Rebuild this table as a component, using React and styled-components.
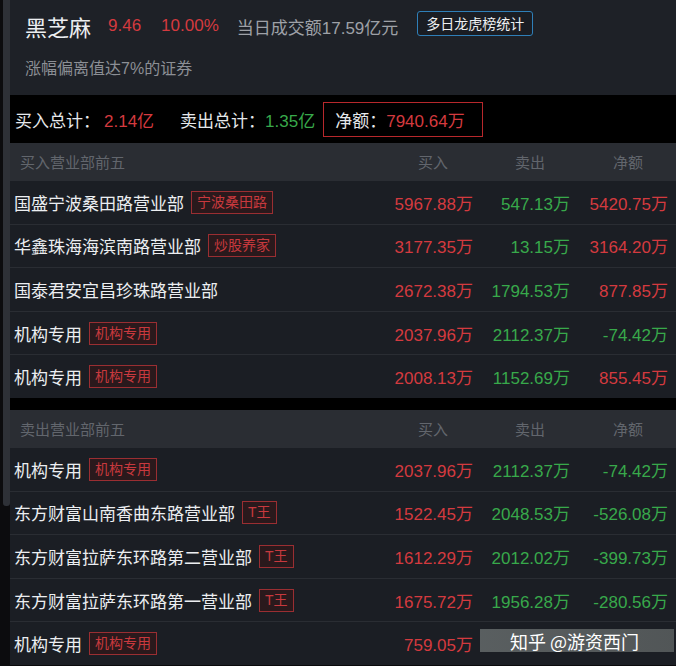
import React from 'react';
import styled, { createGlobalStyle } from 'styled-components';

const GlobalStyle = createGlobalStyle`
  html, body {
    margin: 0;
    padding: 0;
    background: #0a0a0c;
  }
  body {
    font-family: 'Liberation Sans', 'Noto Sans CJK SC', sans-serif;
  }
`;

const RED = '#d43a3f';
const GREEN = '#38a94b';

const Frame = styled.div`
  position: relative;
  width: 676px;
  height: 666px;
  display: flex;
  background: #0a0a0c;
  overflow: hidden;
`;

const Rail = styled.div`
  width: 10px;
  display: flex;
  flex-direction: column;
  background: #0c0c0e;
  padding-left: 3px;
  box-sizing: border-box;
`;

const RailThumb = styled.div`
  height: 506px;
  background: #2e3137;
  border-radius: 0 0 3px 3px;
`;

const Main = styled.div`
  flex: 1;
  display: flex;
  flex-direction: column;
`;

const Header = styled.div`
  height: 95px;
  background: #1e2127;
  padding: 0 0 0 15px;
  display: flex;
  flex-direction: column;
  box-sizing: border-box;
`;

const TitleRow = styled.div`
  display: flex;
  align-items: center;
  height: 40px;
  margin-top: 6px;
`;

const Stock = styled.span`
  font-size: 22px;
  color: #eceef1;
  margin-right: 17px;
`;

const Quote = styled.span`
  font-size: 17px;
  color: ${RED};
  margin-right: ${p => p.$gap || 20}px;
`;

const Turnover = styled.span`
  font-size: 17px;
  color: #9ea1a7;
  margin-right: 19px;
`;

const MultiButton = styled.button`
  font-family: inherit;
  font-size: 14px;
  color: #eef0f2;
  background: #1a1d23;
  border: 1px solid #2f7fb8;
  border-radius: 3px;
  height: 25px;
  padding: 0 8px;
  margin-top: -6px;
`;

const Sub = styled.div`
  font-size: 16px;
  color: #8c8f95;
  margin-top: 9px;
`;

const Summary = styled.div`
  height: 48px;
  background: #000;
  display: flex;
  align-items: center;
  padding-left: 5px;
  font-size: 17px;
  color: #e6e8eb;
`;

const SumLabel = styled.span`
  margin-left: ${p => p.$ml || 0}px;
`;

const SumValue = styled.span`
  color: ${p => p.$color};
  margin-left: ${p => p.$ml || 0}px;
`;

const NetBox = styled.div`
  margin-left: 8px;
  height: 35px;
  width: 160px;
  box-sizing: border-box;
  border: 1.5px solid #b8282c;
  display: flex;
  align-items: center;
  padding-left: 11px;
`;

const Section = styled.div`
  display: flex;
  flex-direction: column;
  background: #1b1e24;
`;

const Gap = styled.div`
  height: 12px;
  background: #000;
`;

const Grid = styled.div`
  display: grid;
  grid-template-columns: 1fr 98px 97px 98px;
  padding-right: 8px;
  align-items: center;
`;

const HeadRow = styled(Grid)`
  height: 37px;
  background: #2a2d33;
  font-size: 15px;
  color: #62666d;
`;

const HeadTitle = styled.span`
  padding-left: 10px;
`;

const HeadCol = styled.span`
  text-align: right;
  padding-right: 25px;
`;

const Row = styled(Grid)`
  height: 43.6px;
  box-sizing: border-box;
  border-top: 1px solid #2a2d33;
  font-size: 17px;
`;

const Name = styled.div`
  display: flex;
  align-items: center;
  gap: 7px;
  padding-left: 4px;
  color: #eceef1;
  white-space: nowrap;
`;

const Tag = styled.span`
  font-size: 14px;
  color: #c8393e;
  background: #2a191c;
  border: 1px solid #9a2e32;
  height: 21px;
  line-height: 21px;
  padding: 0 5px;
`;

const Num = styled.span`
  text-align: right;
  color: ${p => p.$color};
  white-space: nowrap;
`;

const Watermark = styled.div`
  position: absolute;
  left: 480px;
  top: 629px;
  width: 194px;
  height: 23px;
  background: linear-gradient(90deg, rgba(110, 116, 116, 0.75), rgba(95, 100, 100, 0.8));
  display: flex;
  align-items: center;
  padding-left: 30px;
  box-sizing: border-box;
  font-size: 18px;
  color: #fff;
  font-family: 'Noto Sans CJK SC', sans-serif;
`;

const buyRows = [
  ['国盛宁波桑田路营业部', '宁波桑田路', '5967.88万', '547.13万', '5420.75万'],
  ['华鑫珠海海滨南路营业部', '炒股养家', '3177.35万', '13.15万', '3164.20万'],
  ['国泰君安宜昌珍珠路营业部', null, '2672.38万', '1794.53万', '877.85万'],
  ['机构专用', '机构专用', '2037.96万', '2112.37万', '-74.42万'],
  ['机构专用', '机构专用', '2008.13万', '1152.69万', '855.45万'],
];

const sellRows = [
  ['机构专用', '机构专用', '2037.96万', '2112.37万', '-74.42万'],
  ['东方财富山南香曲东路营业部', 'T王', '1522.45万', '2048.53万', '-526.08万'],
  ['东方财富拉萨东环路第二营业部', 'T王', '1612.29万', '2012.02万', '-399.73万'],
  ['东方财富拉萨东环路第一营业部', 'T王', '1675.72万', '1956.28万', '-280.56万'],
  ['机构专用', '机构专用', '759.05万', '', ''],
];

const Table = ({ title, rows }) => (
  <Section>
    <HeadRow>
      <HeadTitle>{title}</HeadTitle>
      <HeadCol>买入</HeadCol>
      <HeadCol>卖出</HeadCol>
      <HeadCol>净额</HeadCol>
    </HeadRow>
    {rows.map(([name, tag, buy, sell, net], i) => (
      <Row key={i}>
        <Name>
          {name}
          {tag && <Tag>{tag}</Tag>}
        </Name>
        <Num $color={RED}>{buy}</Num>
        <Num $color={GREEN}>{sell}</Num>
        <Num $color={net.startsWith('-') ? GREEN : RED}>{net}</Num>
      </Row>
    ))}
  </Section>
);

const App = () => (
  <>
    <GlobalStyle />
    <Frame>
      <Rail>
        <RailThumb />
      </Rail>
      <Main>
        <Header>
          <TitleRow>
            <Stock>黑芝麻</Stock>
            <Quote>9.46</Quote>
            <Quote $gap={18}>10.00%</Quote>
            <Turnover>当日成交额17.59亿元</Turnover>
            <MultiButton>多日龙虎榜统计</MultiButton>
          </TitleRow>
          <Sub>涨幅偏离值达7%的证券</Sub>
        </Header>
        <Summary>
          <SumLabel>买入总计：</SumLabel>
          <SumValue $color={RED} $ml={4}>2.14亿</SumValue>
          <SumLabel $ml={26}>卖出总计：</SumLabel>
          <SumValue $color={GREEN}>1.35亿</SumValue>
          <NetBox>
            净额：<SumValue $color={RED}>7940.64万</SumValue>
          </NetBox>
        </Summary>
        <Table title="买入营业部前五" rows={buyRows} />
        <Gap />
        <Table title="卖出营业部前五" rows={sellRows} />
      </Main>
      <Watermark>知乎 @游资西门</Watermark>
    </Frame>
  </>
);

export default App;
